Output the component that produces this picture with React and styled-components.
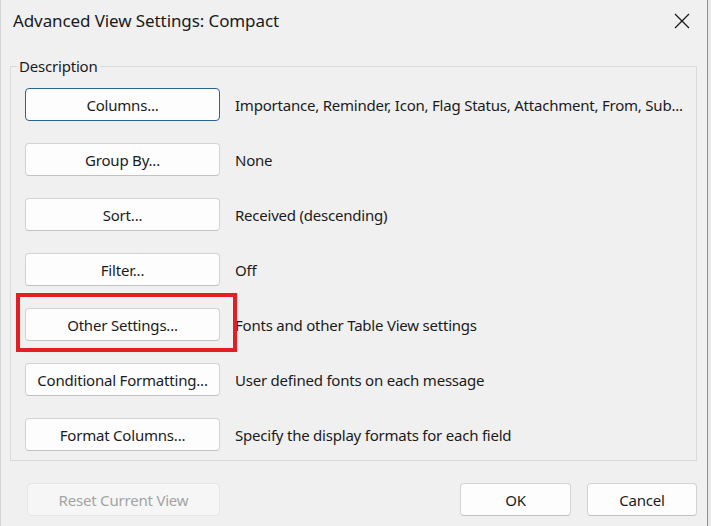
import React from "react";
import styled, { createGlobalStyle } from "styled-components";

const Global = createGlobalStyle`
  html, body { margin: 0; padding: 0; background: #e9e9e9; }
  body { font-family: "Segoe UI", "Noto Sans", "Open Sans", sans-serif; color: #1b1b1b; }
  * { box-sizing: border-box; }
`;

const Window = styled.div`
  width: 708px;
  height: 526px;
  background: #f0f0f0;
  border-left: 1px solid #d4d4d4;
  border-right: 1px solid #8f8f8f;
  display: flex;
  flex-direction: column;
`;

const TitleBar = styled.div`
  height: 42px;
  display: flex;
  align-items: center;
  justify-content: space-between;
  padding: 0 16px 0 12px;
`;

const Title = styled.div`
  font-size: 17px;
  letter-spacing: -0.1px;
  color: #1a1a1a;
  padding-bottom: 2px;
`;

const CloseButton = styled.button`
  border: none;
  background: transparent;
  padding: 0;
  width: 18px;
  height: 18px;
  display: flex;
  align-items: center;
  justify-content: center;
  margin-bottom: 1px;
`;

const Group = styled.fieldset`
  margin: 14px 10px 0 9px;
  border: 1px solid #dadada;
  padding: 12px 0 9px 14px;
  min-width: 0;
`;

const Legend = styled.legend`
  font-size: 15px;
  line-height: 20px;
  letter-spacing: -0.2px;
  padding: 0 2px;
  margin-left: -8px;
  color: #1b1b1b;
`;

const Rows = styled.div`
  display: flex;
  flex-direction: column;
  gap: 22px;
`;

const Row = styled.div`
  position: relative;
  display: grid;
  grid-template-columns: 195px 1fr;
  column-gap: 15px;
  align-items: center;
`;

const Button = styled.button`
  height: 33px;
  width: ${(p) => p.$width || "195px"};
  background: ${(p) => (p.disabled ? "#f6f6f6" : "#fdfdfd")};
  border: 1px solid ${(p) => (p.$default ? "#2c6396" : p.disabled ? "#e6e6e6" : "#d3d3d3")};
  border-bottom-color: ${(p) => (p.$default ? "#2c6396" : p.disabled ? "#e6e6e6" : "#c2c2c2")};
  border-radius: 4px;
  font-family: inherit;
  font-size: 15px;
  letter-spacing: -0.2px;
  color: ${(p) => (p.disabled ? "#a3a3a3" : "#1b1b1b")};
  padding: 0;
  white-space: nowrap;
`;

const Desc = styled.div`
  font-size: 15px;
  letter-spacing: -0.22px;
  color: #1b1b1b;
  white-space: nowrap;
  overflow: hidden;
`;

const Highlight = styled.div`
  position: absolute;
  left: -9px;
  top: -15px;
  width: 221px;
  height: 59px;
  border: 4px solid #e31e24;
  pointer-events: none;
`;

const Footer = styled.div`
  display: flex;
  align-items: center;
  margin-top: 22px;
  padding: 0 10px 0 26px;
  gap: 16px;
`;

const Spacer = styled.div`
  flex: 1;
`;

const rows = [
  { label: "Columns...", desc: "Importance, Reminder, Icon, Flag Status, Attachment, From, Sub...", def: true },
  { label: "Group By...", desc: "None" },
  { label: "Sort...", desc: "Received (descending)" },
  { label: "Filter...", desc: "Off" },
  { label: "Other Settings...", desc: "Fonts and other Table View settings", marked: true },
  { label: "Conditional Formatting...", desc: "User defined fonts on each message" },
  { label: "Format Columns...", desc: "Specify the display formats for each field" },
];

export default function App() {
  return (
    <>
      <Global />
      <Window>
        <TitleBar>
          <Title>Advanced View Settings: Compact</Title>
          <CloseButton aria-label="Close">
            <svg width="16" height="16" viewBox="0 0 16 16">
              <path d="M1 1 L15 15 M15 1 L1 15" stroke="#1a1a1a" strokeWidth="1.3" fill="none" />
            </svg>
          </CloseButton>
        </TitleBar>
        <Group>
          <Legend>Description</Legend>
          <Rows>
            {rows.map((r) => (
              <Row key={r.label}>
                <Button $default={r.def}>{r.label}</Button>
                <Desc>{r.desc}</Desc>
                {r.marked && <Highlight />}
              </Row>
            ))}
          </Rows>
        </Group>
        <Footer>
          <Button disabled $width="193px">Reset Current View</Button>
          <Spacer />
          <Button $width="111px">OK</Button>
          <Button $width="110px">Cancel</Button>
        </Footer>
      </Window>
    </>
  );
}
